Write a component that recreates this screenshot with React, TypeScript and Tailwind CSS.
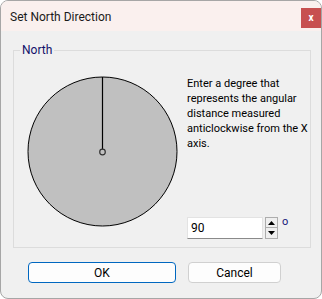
import React from "react";

function Dial() {
  return (
    <svg width="152" height="152" viewBox="0 0 152 152" className="block">
      <circle cx="75.5" cy="75.5" r="74.5" fill="#c0c0c0" stroke="#000" strokeWidth="1" />
      <line x1="75.5" y1="1" x2="75.5" y2="75.5" stroke="#000" strokeWidth="1.2" />
      <circle cx="75.5" cy="76" r="2.8" fill="#c0c0c0" stroke="#333" strokeWidth="1.2" />
    </svg>
  );
}

export default function App() {
  return (
    <div
      className="w-[322px] h-[299px] box-border border border-[#a6a6a6] rounded-[8px] overflow-hidden bg-[#f0f0f0] flex flex-col text-black"
      style={{ fontFamily: 'Roboto, "Liberation Sans", sans-serif' }}
    >
      <div className="h-[30px] bg-[#faf0ee] flex items-start shrink-0">
        <div className="pl-[9px] pt-[8px] text-[12px] leading-[16px] text-[#1a1a1a]">Set North Direction</div>
        <div className="ml-auto mt-[7px] mr-[0px] w-[20px] h-[20px] bg-[#c75050] flex items-center justify-center text-white text-[10px] font-bold leading-none">
          x
        </div>
      </div>

      <div className="pl-[12px] mt-[19px]">
        <div className="relative w-[298px] h-[198px] border border-[#dcdcdc] flex">
          <div className="absolute left-[6px] top-[-8px] px-[2px] bg-[#f0f0f0] text-[12px] leading-[15px] text-[#10106a]">
            North
          </div>
          <div className="ml-[13px] mt-[25px]">
            <Dial />
          </div>
          <div className="ml-[8px] mt-[25px] flex flex-col">
            <div className="text-[11px] leading-[15px] whitespace-nowrap">
              Enter a degree that
              <br />
              represents the angular
              <br />
              distance measured
              <br />
              anticlockwise from the X
              <br />
              axis.
            </div>
            <div className="mt-[66px] flex items-start">
              <div className="w-[76px] h-[22px] bg-white border border-[#e3e3e3] border-b-[#8a8a8a] flex items-center pl-[3px] text-[12px]">
                90
              </div>
              <div className="ml-[2px] flex flex-col">
                <div className="w-[13px] h-[11px] border border-[#adadad] bg-[#efefef] flex items-center justify-center">
                  <svg width="7" height="4" viewBox="0 0 7 4"><path d="M0 4 L3.5 0 L7 4 Z" fill="#000" /></svg>
                </div>
                <div className="w-[13px] h-[11px] border border-t-0 border-[#adadad] bg-[#efefef] flex items-center justify-center">
                  <svg width="7" height="4" viewBox="0 0 7 4"><path d="M0 0 L3.5 4 L7 0 Z" fill="#000" /></svg>
                </div>
              </div>
              <div className="ml-[4px] mt-[-1px] text-[11px] leading-[12px] text-[#141478]">o</div>
            </div>
          </div>
        </div>
      </div>

      <div className="pl-[27px] mt-[14px] flex gap-[12px]">
        <div className="w-[148px] h-[21px] bg-[#fdfdfd] border border-[#0067c0] rounded-[4px] flex items-center justify-center text-[12px]">
          OK
        </div>
        <div className="w-[93px] h-[21px] bg-[#fdfdfd] border border-[#d0d0d0] rounded-[4px] flex items-center justify-center text-[12px]">
          Cancel
        </div>
      </div>
    </div>
  );
}
